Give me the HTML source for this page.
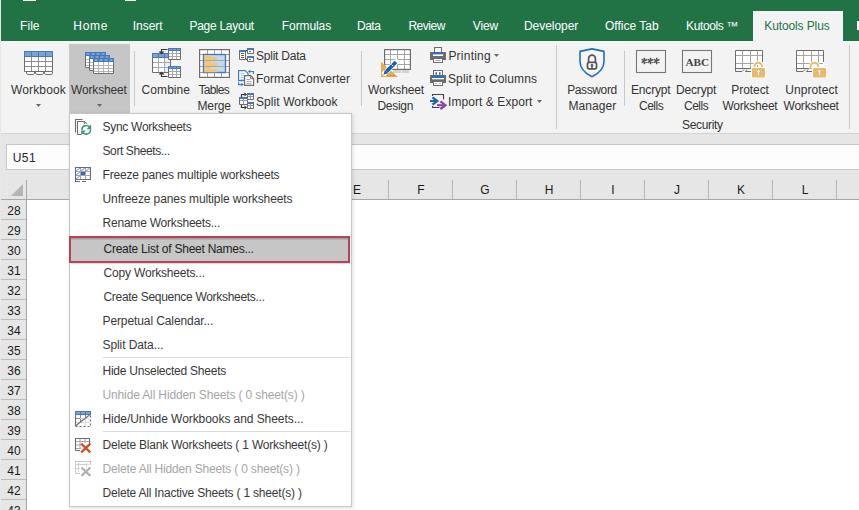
<!DOCTYPE html>
<html><head><meta charset="utf-8">
<style>
*{margin:0;padding:0;box-sizing:border-box}
html,body{width:859px;height:510px;overflow:hidden;background:#fff}
body{position:relative;font-family:"Liberation Sans",sans-serif;font-size:12px;color:#262626}
.a{position:absolute}
.t{position:absolute;white-space:nowrap;line-height:16px;font-size:12px;z-index:10}
svg{position:absolute;overflow:visible;z-index:12}
#menu{position:absolute;left:69px;top:113px;width:283px;height:394px;background:#fff;border:1px solid #c6c6c6;box-shadow:1px 1px 4px rgba(0,0,0,.13);z-index:8}
</style></head><body>
<!-- tab bar -->
<div class="a" style="left:0;top:0;width:859px;height:41px;background:#217346"></div>
<div class="a" style="left:23px;top:0;width:13px;height:1px;background:#fff"></div>
<div class="a" style="left:125px;top:0;width:11px;height:1px;background:#fff"></div>
<div class="a" style="left:753px;top:11px;width:90px;height:30px;background:#f3f3f3"></div>
<div class="a" style="left:857px;top:21px;width:2px;height:9px;background:#fff"></div>
<!-- ribbon -->
<div class="a" style="left:0;top:41px;width:859px;height:92px;background:#f3f3f3"></div>
<div class="a" style="left:0;top:133px;width:859px;height:1px;background:#d4d4d4"></div>
<div class="a" style="left:69px;top:44px;width:61px;height:70px;background:#c6c6c6"></div>
<div class="a" style="left:134px;top:51px;width:1px;height:55px;background:#c8c8c8"></div>
<div class="a" style="left:361px;top:51px;width:1px;height:55px;background:#c8c8c8"></div>
<div class="a" style="left:556px;top:45px;width:1px;height:84px;background:#c8c8c8"></div>
<div class="a" style="left:624px;top:51px;width:1px;height:55px;background:#c8c8c8"></div>
<div class="a" style="left:849px;top:45px;width:1px;height:84px;background:#c8c8c8"></div>
<svg style="left:24px;top:51px;z-index:12" width="30" height="25" viewBox="0 0 30 25"><rect x="0" y="5" width="29" height="16" fill="#fff"/><rect x="0" y="0" width="29" height="6" fill="#447abd"/><rect x="1" y="1" width="6" height="4" fill="#7da2d0"/><rect x="8" y="1" width="6" height="4" fill="#7da2d0"/><rect x="15" y="1" width="6" height="4" fill="#7da2d0"/><rect x="22" y="1" width="6" height="4" fill="#7da2d0"/><path d="M7.5 6V21 M14.5 6V21 M21.5 6V21 M1 10.5H28 M1 15.5H28" stroke="#8c8c8c" stroke-width="1" fill="none"/><path d="M.5 6V20.5H28.5V6" stroke="#6d6d6d" stroke-width="1" fill="none"/><path d="M2.5 21V22.5L4 23.5H9L10.5 22.5V21 M11.5 21V22.5L13 23.5H18L19.5 22.5V21 M20.5 21V22.5L22 23.5H27L28.5 22.5V21" stroke="#6d6d6d" stroke-width="1" fill="#fff"/></svg>
<svg style="left:85px;top:52px;z-index:12" width="30" height="23" viewBox="0 0 30 23"><rect x="0" y="0" width="21" height="16" fill="#fff"/><rect x="0" y="0" width="21" height="4" fill="#447abd"/><rect x="1.5" y="1" width="3.0" height="2" fill="#7da2d0"/><rect x="6.5" y="1" width="3.0" height="2" fill="#7da2d0"/><rect x="11.5" y="1" width="3.0" height="2" fill="#7da2d0"/><rect x="16.5" y="1" width="3.0" height="2" fill="#7da2d0"/><path d="M5.5 4V15 M10.5 4V15 M15.5 4V15 M1 7.5H20 M1 10.5H20 M1 13.5H20" stroke="#b4b4b4" stroke-width="1" fill="none"/><path d="M0.5 4V15.5H20.5V4" stroke="#6d6d6d" stroke-width="1" fill="none"/><rect x="4" y="3" width="21" height="16" fill="#fff"/><rect x="4" y="3" width="21" height="4" fill="#447abd"/><rect x="5.5" y="4" width="3.0" height="2" fill="#7da2d0"/><rect x="10.5" y="4" width="3.0" height="2" fill="#7da2d0"/><rect x="15.5" y="4" width="3.0" height="2" fill="#7da2d0"/><rect x="20.5" y="4" width="3.0" height="2" fill="#7da2d0"/><path d="M9.5 7V18 M14.5 7V18 M19.5 7V18 M5 10.5H24 M5 13.5H24 M5 16.5H24" stroke="#b4b4b4" stroke-width="1" fill="none"/><path d="M4.5 7V18.5H24.5V7" stroke="#6d6d6d" stroke-width="1" fill="none"/><rect x="8" y="6" width="21" height="16" fill="#fff"/><rect x="8" y="6" width="21" height="4" fill="#447abd"/><rect x="9.5" y="7" width="3.0" height="2" fill="#7da2d0"/><rect x="14.5" y="7" width="3.0" height="2" fill="#7da2d0"/><rect x="19.5" y="7" width="3.0" height="2" fill="#7da2d0"/><rect x="24.5" y="7" width="3.0" height="2" fill="#7da2d0"/><path d="M13.5 10V21 M18.5 10V21 M23.5 10V21 M9 13.5H28 M9 16.5H28 M9 19.5H28" stroke="#b4b4b4" stroke-width="1" fill="none"/><path d="M8.5 10V21.5H28.5V10" stroke="#6d6d6d" stroke-width="1" fill="none"/></svg>
<svg style="left:152px;top:48px;z-index:12" width="30" height="30" viewBox="0 0 30 30"><rect x="0" y="5" width="19" height="20" fill="#fff"/><rect x="13" y="10" width="6" height="15" fill="#eaf0f8"/><rect x="0" y="5" width="19" height="5" fill="#447abd"/><rect x="1" y="6" width="5" height="3" fill="#7da2d0"/><rect x="7" y="6" width="5" height="3" fill="#7da2d0"/><rect x="13" y="6" width="5" height="3" fill="#7da2d0"/><path d="M6.5 10V24M12.5 10V24M1 14.5H18M1 19.5H18" stroke="#a8a8a8" fill="none"/><path d="M.5 10V24.5H18.5V10" stroke="#6d6d6d" fill="none"/><rect x="16" y="0" width="13" height="12" fill="#fff"/><rect x="16" y="0" width="13" height="3" fill="#447abd"/><rect x="17" y="1" width="3" height="1" fill="#7da2d0"/><rect x="21" y="1" width="3" height="1" fill="#7da2d0"/><rect x="25" y="1" width="3" height="1" fill="#7da2d0"/><path d="M20.5 3V11M24.5 3V11M17 5.5H28M17 8.5H28" stroke="#a8a8a8" fill="none"/><path d="M16.5 3V11.5H28.5V3" stroke="#6d6d6d" fill="none"/><rect x="16" y="18" width="13" height="12" fill="#fff"/><rect x="16" y="18" width="13" height="3" fill="#447abd"/><rect x="17" y="19" width="3" height="1" fill="#7da2d0"/><rect x="21" y="19" width="3" height="1" fill="#7da2d0"/><rect x="25" y="19" width="3" height="1" fill="#7da2d0"/><path d="M20.5 21V29M24.5 21V29M17 23.5H28M17 26.5H28" stroke="#a8a8a8" fill="none"/><path d="M16.5 21V29.5H28.5V21" stroke="#6d6d6d" fill="none"/><path d="M15.5 1.5H9.5V4.5M15.5 28.5H9.5V25.5" stroke="#3a3a3a" stroke-width="1.2" fill="none"/><path d="M6.5 3.5L9.5 6.5L12.5 3.5Z M6.5 26.5L9.5 23.5L12.5 26.5Z" fill="#3a3a3a"/></svg>
<svg style="left:199px;top:49px;z-index:12" width="31" height="29" viewBox="0 0 31 29"><rect x="0" y="0" width="31" height="29" fill="#fff"/><path d="M8.5 0V29M15.5 0V29M22.5 0V29M0 5.5H31M0 11.5H31M0 17.5H31M0 23.5H31" stroke="#a0a0a0" fill="none"/><rect x="4.5" y="5.5" width="22" height="18" fill="#c6d8ee" stroke="#447abd" stroke-width="1.4"/><path d="M5.2 6.2H12V8.5H14V7.7H16V8.5H18.3V11.5H5.2Z" fill="#f2c679"/><path d="M5.2 12H12V14.3H14V13.5H16V14.3H18.3V17.3H5.2Z" fill="#f2c679"/><path d="M5.2 18H12V20.3H14V19.5H16V20.3H18.3V23.3H5.2Z" fill="#f2c679"/><path d="M5 11.5H26M5 17.5H26" stroke="#a8a8a8" fill="none"/><rect x=".6" y=".6" width="29.8" height="27.8" fill="none" stroke="#6d6d6d" stroke-width="1.2"/></svg>
<svg style="left:239px;top:48px;z-index:12" width="16" height="15" viewBox="0 0 16 15"><rect x="0" y="2" width="7" height="10" fill="#fff"/><rect x="0" y="2" width="7" height="2" fill="#447abd"/><path d="" stroke="#9a9a9a" stroke-width="1" fill="none"/><path d="M0.5 4V11.5H6.5V4" stroke="#6d6d6d" stroke-width="1" fill="none"/><path d="M2.5 5.5H4.5M2.5 7.5H4.5M2.5 9.5H4.5" stroke="#555" stroke-width="1" stroke-linecap="round"/><rect x="8" y="0" width="7" height="6" fill="#fff"/><rect x="8" y="0" width="7" height="2" fill="#447abd"/><path d="" stroke="#9a9a9a" stroke-width="1" fill="none"/><path d="M8.5 2V5.5H14.5V2" stroke="#6d6d6d" stroke-width="1" fill="none"/><rect x="8" y="8" width="7" height="6" fill="#fff"/><rect x="8" y="8" width="7" height="2" fill="#447abd"/><path d="" stroke="#9a9a9a" stroke-width="1" fill="none"/><path d="M8.5 10V13.5H14.5V10" stroke="#6d6d6d" stroke-width="1" fill="none"/><path d="M10.5 3.5H11.5M10.5 11.5H11.5" stroke="#555" stroke-width="1" stroke-linecap="round"/><path d="M6.5 3.5L8.2 2M6.5 10.5L8.2 12" stroke="#333" fill="none"/></svg>
<svg style="left:238px;top:70px;z-index:12" width="16" height="16" viewBox="0 0 16 16"><path d="M.6 .6H7.2L10 3.4V10.6H.6Z" fill="#fff" stroke="#3f7bc4" stroke-width="1.2"/><path d="M2.5 3.5H6.5M2.5 5.5H8M2.5 7.5H8M2.5 9.5H6" stroke="#a8c4e8"/><path d="M6.6 5.6H12.6L15.6 8.6V15.4H6.6Z" fill="#fff" stroke="#6d6d6d" stroke-width="1.2"/><path d="M12.5 5.6V8.7H15.6" stroke="#6d6d6d" fill="none" stroke-width=".9"/><path d="M8.5 9.5H12M8.5 11.5H13.8M8.5 13.5H13.8" stroke="#a8a8a8"/><path d="M15.4 4V1.5H11.5" stroke="#3f7bc4" stroke-width="1.2" fill="none"/><path d="M12.3 -.4L10 1.5L12.3 3.4Z" fill="#3f7bc4"/><path d="M.6 12.3V14.6H4" stroke="#3f7bc4" stroke-width="1.2" fill="none"/><path d="M3.5 12.7L5.8 14.6L3.5 16.5Z" fill="#3f7bc4"/></svg>
<svg style="left:238px;top:93px;z-index:12" width="17" height="16" viewBox="0 0 17 16"><rect x="1" y="4" width="9" height="8" fill="#fff"/><rect x="1" y="4" width="9" height="2" fill="#447abd"/><path d="M5.5 6V11 M2 7.5H9" stroke="#9a9a9a" stroke-width="1" fill="none"/><path d="M1.5 6V11.5H9.5V6" stroke="#6d6d6d" stroke-width="1" fill="none"/><rect x="9" y="0" width="7" height="7" fill="#fff"/><rect x="9" y="0" width="7" height="2" fill="#447abd"/><path d="M12.5 2V6 M10 3.5H15" stroke="#9a9a9a" stroke-width="1" fill="none"/><path d="M9.5 2V6.5H15.5V2" stroke="#6d6d6d" stroke-width="1" fill="none"/><rect x="9" y="9" width="7" height="7" fill="#fff"/><rect x="9" y="9" width="7" height="2" fill="#447abd"/><path d="M12.5 11V15 M10 12.5H15" stroke="#9a9a9a" stroke-width="1" fill="none"/><path d="M9.5 11V15.5H15.5V11" stroke="#6d6d6d" stroke-width="1" fill="none"/><path d="M3.5 4V1.5H7M3.5 12V14.5H7" stroke="#333" stroke-width="1.2" fill="none"/><path d="M6.5 -.5L9 1.5L6.5 3.5ZM6.5 12.5L9 14.5L6.5 16.5Z" fill="#333"/></svg>
<svg style="left:381px;top:49px;z-index:12" width="32" height="29" viewBox="0 0 32 29"><rect x="12" y="21" width="16" height="3" fill="#d4d4d4"/><path d="M20.5 21V24" stroke="#eee"/><rect x="3" y="0" width="27" height="21" fill="#fff"/><path d="M9.5 1V20M16.5 1V20M23.5 1V20M4 5.5H29M4 10.5H29M4 15.5H29" stroke="#a6a6a6" fill="none"/><rect x="3.6" y=".6" width="25.8" height="19.8" fill="none" stroke="#6d6d6d" stroke-width="1.2"/><path d="M0 12.7V28H17Z" fill="#e8ab4f"/><path d="M3.8 24.2L15.2 12.8" stroke="#fff" stroke-width="5.4" stroke-linecap="round"/><path d="M5.6 22.4L15 13" stroke="#1f5fad" stroke-width="3.8"/><path d="M2.4 25.8L3.9 20.8L7.4 24.3Z" fill="#1f5fad"/><path d="M12.2 17.2L10.4 15.4" stroke="#fff" stroke-width=".9"/><path d="M6 26.5H7M9 26.5H10M12 26.5H13" stroke="#8a6a30" stroke-width=".8"/></svg>
<svg style="left:430px;top:46px;z-index:12" width="17" height="17" viewBox="0 0 17 17"><rect x="4.5" y="1.5" width="7" height="6" fill="#fff" stroke="#6d6d6d"/><path d="M0 6H3V10H13V6H16V14H0Z" fill="#6d6d6d"/><rect x="3" y="6" width="10" height="2.6" fill="#2f6ebd"/><rect x="3" y="8.6" width="10" height="1.4" fill="#fff"/><rect x="3.5" y="12.5" width="9" height="4" fill="#fff" stroke="#6d6d6d"/><path d="M5.5 14.5H10.5" stroke="#8fb0d8"/></svg>
<svg style="left:430px;top:69px;z-index:12" width="17" height="17" viewBox="0 0 17 17"><rect x="3.5" y="1.5" width="9" height="6" fill="#fff" stroke="#6d6d6d"/><path d="M6.2 3.3V5.7M9.8 3.3V5.7" stroke="#2f6ebd" stroke-width="1.6"/><path d="M0 6H16V14H0Z" fill="#6d6d6d"/><rect x="2" y="6.5" width="12" height="2.5" fill="#2f6ebd"/><rect x="2" y="9" width="12" height="1.3" fill="#fff"/><rect x="3.5" y="12.5" width="9" height="4" fill="#fff" stroke="#6d6d6d"/><path d="M5 14.5H7M9 14.5H11" stroke="#8fb0d8"/></svg>
<svg style="left:430px;top:91px;z-index:12" width="18" height="19" viewBox="0 0 18 19"><path d="M2.5 5V3.5H13.5V8.5M2.5 15V16.5H9.5" stroke="#444" stroke-width="1.1" fill="none"/><path d="M0 10H6" stroke="#1f63b4" stroke-width="2"/><path d="M2.5 6.3L7.3 10L2.5 13.7" stroke="#1f63b4" stroke-width="2.3" fill="none"/><path d="M7 14.2H13" stroke="#8540ae" stroke-width="2"/><path d="M10.4 10.4L15.4 14.2L10.4 18" stroke="#8540ae" stroke-width="2.3" fill="none"/></svg>
<svg style="left:579px;top:48px;z-index:12" width="26" height="30" viewBox="0 0 26 30"><path d="M13 .9L25 3.4V13.5C25 20.5 19.5 25.5 13 28.8C6.5 25.5 1 20.5 1 13.5V3.4Z" fill="#f6f6f6" stroke="#1f6fc0" stroke-width="1.6" stroke-linejoin="round"/><path d="M9.6 14V10.6A3.4 3.4 0 0 1 16.4 10.6V14" fill="none" stroke="#555" stroke-width="1.7"/><rect x="8.5" y="14.3" width="9" height="6.6" rx="1.8" fill="#fff" stroke="#555" stroke-width="1.7"/><path d="M13 17.2V20.5" stroke="#555" stroke-width="1.5"/><circle cx="13" cy="17.4" r="1.3" fill="#555"/></svg>
<svg style="left:636px;top:50px;z-index:12" width="30" height="23" viewBox="0 0 30 23"><rect x=".5" y=".5" width="29" height="22" fill="#f3f3f3" stroke="#777" stroke-width="1.1"/><path d="M8.4 7.8V14.2M5.6 9.4L11.2 12.6M5.6 12.6L11.2 9.4M14.5 7.8V14.2M11.7 9.4L17.3 12.6M11.7 12.6L17.3 9.4M20.7 7.8V14.2M17.9 9.4L23.5 12.6M17.9 12.6L23.5 9.4" stroke="#555" stroke-width="1.5"/></svg>
<svg style="left:682px;top:50px;z-index:12" width="30" height="23" viewBox="0 0 30 23"><rect x=".5" y=".5" width="29" height="22" fill="#f3f3f3" stroke="#777" stroke-width="1.1"/><text x="15.3" y="16" text-anchor="middle" font-family="Liberation Serif" font-weight="bold" font-size="11.2" fill="#444">ABC</text></svg>
<svg style="left:735px;top:50px;z-index:12" width="32" height="28" viewBox="0 0 32 28"><rect x="0" y="0" width="28" height="18" fill="#fff"/><path d="M7.5 1V18 M15.5 1V18 M22.5 1V18 M1 5.5H27 M1 13.5H27" stroke="#a6a6a6" fill="none"/><path d="M.5 18V.5H27.5V12" stroke="#6d6d6d" fill="none"/><path d="M.5 18V21.5H7L9 19.5M12 19.5L10.5 21.5H16M1 18.5H17" stroke="#6d6d6d" fill="none"/><path d="M19.4 18.5V16.6A3.85 3.85 0 0 1 27.1 16.6V18.5" fill="none" stroke="#fff" stroke-width="3.6"/><path d="M19.4 18.5V16.6A3.85 3.85 0 0 1 27.1 16.6V18.5" fill="none" stroke="#e9b96c" stroke-width="1.8"/><rect x="16" y="17" width="15" height="11" fill="#fff"/><rect x="17" y="18" width="13" height="9.5" rx=".8" fill="#e9b96c"/><circle cx="23.5" cy="21.3" r="1.2" fill="#fff"/><path d="M23.5 21.5V25" stroke="#fff" stroke-width="1"/></svg>
<svg style="left:796px;top:50px;z-index:12" width="32" height="28" viewBox="0 0 32 28"><rect x="0" y="0" width="28" height="18" fill="#fff"/><path d="M7.5 1V18 M15.5 1V18 M22.5 1V18 M1 5.5H27 M1 13.5H27" stroke="#a6a6a6" fill="none"/><path d="M.5 18V.5H27.5V12" stroke="#6d6d6d" fill="none"/><path d="M.5 18V21.5H7L9 19.5M12 19.5L10.5 21.5H16M1 18.5H17" stroke="#6d6d6d" fill="none"/><path d="M14.6 18.5V16.6A3.85 3.85 0 0 1 22.3 16.6V17.5" fill="none" stroke="#fff" stroke-width="3.6"/><path d="M14.6 18.5V16.6A3.85 3.85 0 0 1 22.3 16.6V17.5" fill="none" stroke="#e9b96c" stroke-width="1.8"/><rect x="16" y="17" width="15" height="11" fill="#fff"/><rect x="17" y="18" width="13" height="9.5" rx=".8" fill="#e9b96c"/><circle cx="23.5" cy="21.3" r="1.2" fill="#fff"/><path d="M23.5 21.5V25" stroke="#fff" stroke-width="1"/></svg>
<svg style="left:36px;top:104px;z-index:12" width="6" height="4" viewBox="0 0 6 4"><path d="M0 0H5L2.5 3Z" fill="#666"/></svg>
<svg style="left:97px;top:104px;z-index:12" width="6" height="4" viewBox="0 0 6 4"><path d="M0 0H5L2.5 3Z" fill="#666"/></svg>
<svg style="left:494px;top:54px;z-index:12" width="6" height="4" viewBox="0 0 6 4"><path d="M0 0H5L2.5 3Z" fill="#666"/></svg>
<svg style="left:537px;top:100px;z-index:12" width="6" height="4" viewBox="0 0 6 4"><path d="M0 0H5L2.5 3Z" fill="#666"/></svg>
<!-- formula bar -->
<div class="a" style="left:0;top:134px;width:859px;height:66px;background:#e6e6e6"></div>
<div class="a" style="left:6px;top:144px;width:860px;height:26px;background:#fdfdfd;border:1px solid #c6c6c6"></div>
<!-- headers -->
<div class="a" style="left:0;top:199px;width:859px;height:1px;background:#a6a6a6"></div>
<div class="a" style="left:26px;top:180px;width:1px;height:330px;background:#a6a6a6"></div>
<div class="a" style="left:0;top:200px;width:26px;height:310px;background:#e6e6e6"></div>
<div class="a" style="left:27px;top:200px;width:832px;height:310px;background:#fff"></div>
<div class="a" style="left:388px;top:180px;width:1px;height:19px;background:#b4b4b4"></div>
<div class="a" style="left:452px;top:180px;width:1px;height:19px;background:#b4b4b4"></div>
<div class="a" style="left:516px;top:180px;width:1px;height:19px;background:#b4b4b4"></div>
<div class="a" style="left:580px;top:180px;width:1px;height:19px;background:#b4b4b4"></div>
<div class="a" style="left:644px;top:180px;width:1px;height:19px;background:#b4b4b4"></div>
<div class="a" style="left:708px;top:180px;width:1px;height:19px;background:#b4b4b4"></div>
<div class="a" style="left:772px;top:180px;width:1px;height:19px;background:#b4b4b4"></div>
<div class="a" style="left:836px;top:180px;width:1px;height:19px;background:#b4b4b4"></div>
<div class="a" style="left:900px;top:180px;width:1px;height:19px;background:#b4b4b4"></div>
<div class="a" style="left:0;top:219px;width:26px;height:1px;background:#bcbcbc"></div>
<div class="a" style="left:0;top:239px;width:26px;height:1px;background:#bcbcbc"></div>
<div class="a" style="left:0;top:259px;width:26px;height:1px;background:#bcbcbc"></div>
<div class="a" style="left:0;top:279px;width:26px;height:1px;background:#bcbcbc"></div>
<div class="a" style="left:0;top:299px;width:26px;height:1px;background:#bcbcbc"></div>
<div class="a" style="left:0;top:319px;width:26px;height:1px;background:#bcbcbc"></div>
<div class="a" style="left:0;top:339px;width:26px;height:1px;background:#bcbcbc"></div>
<div class="a" style="left:0;top:359px;width:26px;height:1px;background:#bcbcbc"></div>
<div class="a" style="left:0;top:379px;width:26px;height:1px;background:#bcbcbc"></div>
<div class="a" style="left:0;top:399px;width:26px;height:1px;background:#bcbcbc"></div>
<div class="a" style="left:0;top:419px;width:26px;height:1px;background:#bcbcbc"></div>
<div class="a" style="left:0;top:439px;width:26px;height:1px;background:#bcbcbc"></div>
<div class="a" style="left:0;top:459px;width:26px;height:1px;background:#bcbcbc"></div>
<div class="a" style="left:0;top:479px;width:26px;height:1px;background:#bcbcbc"></div>
<div class="a" style="left:0;top:499px;width:26px;height:1px;background:#bcbcbc"></div>
<div class="a" style="left:0;top:519px;width:26px;height:1px;background:#bcbcbc"></div>
<svg style="left:0;top:0" width="30" height="200"><path d="M23 184 L23 196 L11 196 Z" fill="#b4b4b4"/></svg>
<div class="a" style="left:0;top:0;width:1px;height:510px;background:#e8e8e8;z-index:20"></div>
<!-- menu -->
<div id="menu"></div>
<div class="a" style="left:69px;top:236px;width:281px;height:27px;background:#c6c6c6;border:2px solid #bc3f5a;z-index:9"></div>
<div class="a" style="left:71px;top:238px;width:277px;height:2px;background:linear-gradient(#9a9a9a,#b8b8b8);z-index:9"></div>
<div class="a" style="left:71px;top:263px;width:279px;height:1px;background:#dcdcdc;z-index:9"></div>
<div class="a" style="left:103px;top:357px;width:247px;height:1px;background:#d9dde1;z-index:9"></div>
<div class="a" style="left:103px;top:431px;width:247px;height:1px;background:#d9dde1;z-index:9"></div>
<svg style="left:72px;top:116px;z-index:12" width="22" height="22" viewBox="0 0 22 22"><path d="M3.5 16.5V3.5H10.5" stroke="#6d6d6d" stroke-width="1.1" fill="none"/><path d="M5.5 18.5V5.5H12.3L15.8 9V9.5M5.5 18.5H9" stroke="#6d6d6d" stroke-width="1.1" fill="none"/><path d="M12.3 5.5V9H15.8Z" fill="#fff" stroke="#6d6d6d" stroke-width="1"/><path d="M9.92 14.17A4.3 4.3 0 0 1 18.10 11.98M18.48 13.43A4.3 4.3 0 0 1 10.30 15.62" stroke="#fff" stroke-width="3.2" fill="none"/><path d="M9.92 14.17A4.3 4.3 0 0 1 18.10 11.98M18.48 13.43A4.3 4.3 0 0 1 10.30 15.62" stroke="#3f9a74" stroke-width="1.6" fill="none"/><path d="M19.2 8.3V13.2H14.6Z M9.2 19.3V14.4H13.8Z" fill="#3f9a74"/></svg>
<svg style="left:72px;top:164px;z-index:12" width="22" height="22" viewBox="0 0 22 22"><rect x="3" y="3" width="16" height="13" fill="#fff"/><path d="M4 7L8 4M9 7L13 4M14 7L18 4M4 11L8 8M4 15L8 12" stroke="#8fb3e0" stroke-width="1.2"/><rect x="9" y="8" width="4" height="3" fill="#2f6ebd"/><path d="M8.5 3V16M13.5 3V16M3 7.5H19M3 11.5H19" stroke="#a6a6a6" fill="none"/><path d="M3.5 18V3.5H18.5V15.5H3.5" stroke="#6d6d6d" stroke-width="1.1" fill="none"/><path d="M4 17.5H8M10 17.5H14" stroke="#6d6d6d" fill="none"/></svg>
<svg style="left:72px;top:408px;z-index:12" width="22" height="22" viewBox="0 0 22 22"><rect x="3" y="3" width="16" height="4" fill="#447abd"/><rect x="4" y="4" width="4" height="2" fill="#7da2d0"/><rect x="9" y="4" width="4" height="2" fill="#7da2d0"/><rect x="14" y="4" width="4" height="2" fill="#7da2d0"/><path d="M8.5 7V14M13.5 7V10M4 10.5H12M4 14.5H8" stroke="#8a8a8a" fill="none"/><path d="M13.5 11V18M4 14.5H18M8 10.5H18" stroke="#e0e0e0" fill="none"/><path d="M3.5 7V18" stroke="#6d6d6d" stroke-width="1.1"/><path d="M3.5 18.5H18.5V7.5" stroke="#6d6d6d" stroke-width="1.2" stroke-dasharray="2 2" fill="none"/><path d="M4 17.5L17.5 7" stroke="#6d6d6d" stroke-width="1.1"/></svg>
<svg style="left:72px;top:434px;z-index:12" width="22" height="22" viewBox="0 0 22 22"><path d="M8 4.5V15M4 7.5H18M4 11H9M13 4.5V9M4 14.5H9" stroke="#a6a6a6" fill="none"/><path d="M3.5 16.5V4.5H17.5V9M3.5 16.5H8" stroke="#6d6d6d" stroke-width="1.1" fill="none"/><path d="M9.2 9.6L18.3 18.3M18.3 9.6L9.2 18.3" stroke="#d34a24" stroke-width="2.3"/></svg>
<svg style="left:72px;top:458px;z-index:12" width="22" height="22" viewBox="0 0 22 22"><path d="M3.5 3.5H18.5M3.5 3.5V15.5M18.5 3.5V7.5M3.5 15.5H8" stroke="#9a9a9a" stroke-width="1" stroke-dasharray="1 1" fill="none"/><path d="M6.5 5V14M4 6.5H17M4 10.5H8M14.5 5V9" stroke="#cfcfcf" fill="none"/><path d="M9.5 9.5L18.3 17.8M18.3 9.5L9.5 17.8" stroke="#b0b0b0" stroke-width="2.3"/></svg>
<div class="t" style="left:20.00px;top:18px;letter-spacing:0.067px;color:#ffffff">File</div>
<div class="t" style="left:73.30px;top:18px;letter-spacing:0.667px;color:#ffffff">Home</div>
<div class="t" style="left:132.70px;top:18px;color:#ffffff">Insert</div>
<div class="t" style="left:189.40px;top:18px;letter-spacing:-0.260px;color:#ffffff">Page Layout</div>
<div class="t" style="left:281.80px;top:18px;letter-spacing:-0.086px;color:#ffffff">Formulas</div>
<div class="t" style="left:357.00px;top:18px;letter-spacing:-0.500px;color:#ffffff">Data</div>
<div class="t" style="left:408.40px;top:18px;letter-spacing:-0.480px;color:#ffffff">Review</div>
<div class="t" style="left:472.80px;top:18px;letter-spacing:-0.100px;color:#ffffff">View</div>
<div class="t" style="left:524.00px;top:18px;letter-spacing:-0.050px;color:#ffffff">Developer</div>
<div class="t" style="left:605.00px;top:18px;color:#ffffff">Office Tab</div>
<div class="t" style="left:686.00px;top:18px;letter-spacing:-0.375px;color:#ffffff">Kutools ™</div>
<div class="t" style="left:764.30px;top:18px;letter-spacing:-0.118px;color:#217346">Kutools Plus</div>
<div class="t" style="left:11.00px;top:82px;letter-spacing:0.143px;color:#333333">Workbook</div>
<div class="t" style="left:71.00px;top:82px;letter-spacing:-0.162px;color:#333333">Worksheet</div>
<div class="t" style="left:141.60px;top:82px;letter-spacing:0.067px;color:#333333">Combine</div>
<div class="t" style="left:198.50px;top:82px;letter-spacing:-0.700px;color:#333333">Tables</div>
<div class="t" style="left:197.50px;top:98px;letter-spacing:-0.125px;color:#333333">Merge</div>
<div class="t" style="left:256.00px;top:48px;letter-spacing:-0.222px;color:#333333">Split Data</div>
<div class="t" style="left:256.00px;top:71px;color:#333333">Format Converter</div>
<div class="t" style="left:256.00px;top:94px;letter-spacing:0.077px;color:#333333">Split Workbook</div>
<div class="t" style="left:368.00px;top:82px;letter-spacing:-0.125px;color:#333333">Worksheet</div>
<div class="t" style="left:377.50px;top:98px;letter-spacing:-0.300px;color:#333333">Design</div>
<div class="t" style="left:448.40px;top:48px;letter-spacing:0.229px;color:#333333">Printing</div>
<div class="t" style="left:448.00px;top:71px;letter-spacing:0.107px;color:#333333">Split to Columns</div>
<div class="t" style="left:448.00px;top:94px;letter-spacing:0.071px;color:#333333">Import &amp; Export</div>
<div class="t" style="left:567.20px;top:82px;letter-spacing:-0.386px;color:#333333">Password</div>
<div class="t" style="left:568.50px;top:98px;letter-spacing:0.083px;color:#333333">Manager</div>
<div class="t" style="left:631.00px;top:82px;letter-spacing:-0.167px;color:#333333">Encrypt</div>
<div class="t" style="left:639.00px;top:98px;letter-spacing:-0.500px;color:#333333">Cells</div>
<div class="t" style="left:676.00px;top:82px;letter-spacing:-0.167px;color:#333333">Decrypt</div>
<div class="t" style="left:684.00px;top:98px;letter-spacing:-0.500px;color:#333333">Cells</div>
<div class="t" style="left:731.30px;top:82px;letter-spacing:-0.067px;color:#333333">Protect</div>
<div class="t" style="left:722.50px;top:98px;letter-spacing:-0.250px;color:#333333">Worksheet</div>
<div class="t" style="left:785.30px;top:82px;letter-spacing:0.062px;color:#333333">Unprotect</div>
<div class="t" style="left:783.50px;top:98px;letter-spacing:-0.213px;color:#333333">Worksheet</div>
<div class="t" style="left:682.00px;top:117px;letter-spacing:-0.343px;color:#333333">Security</div>
<div class="t" style="left:12.70px;top:150px;letter-spacing:0.500px;color:#262626">U51</div>
<div class="t" style="left:325.00px;width:64px;text-align:center;top:182px;color:#1a1a1a">E</div>
<div class="t" style="left:389.00px;width:64px;text-align:center;top:182px;color:#1a1a1a">F</div>
<div class="t" style="left:453.00px;width:64px;text-align:center;top:182px;color:#1a1a1a">G</div>
<div class="t" style="left:517.00px;width:64px;text-align:center;top:182px;color:#1a1a1a">H</div>
<div class="t" style="left:581.00px;width:64px;text-align:center;top:182px;color:#1a1a1a">I</div>
<div class="t" style="left:645.00px;width:64px;text-align:center;top:182px;color:#1a1a1a">J</div>
<div class="t" style="left:709.00px;width:64px;text-align:center;top:182px;color:#1a1a1a">K</div>
<div class="t" style="left:773.00px;width:64px;text-align:center;top:182px;color:#1a1a1a">L</div>
<div class="t" style="left:1.00px;width:26px;text-align:center;top:203px;color:#1a1a1a">28</div>
<div class="t" style="left:1.00px;width:26px;text-align:center;top:223px;color:#1a1a1a">29</div>
<div class="t" style="left:1.00px;width:26px;text-align:center;top:243px;color:#1a1a1a">30</div>
<div class="t" style="left:1.00px;width:26px;text-align:center;top:263px;color:#1a1a1a">31</div>
<div class="t" style="left:1.00px;width:26px;text-align:center;top:283px;color:#1a1a1a">32</div>
<div class="t" style="left:1.00px;width:26px;text-align:center;top:303px;color:#1a1a1a">33</div>
<div class="t" style="left:1.00px;width:26px;text-align:center;top:323px;color:#1a1a1a">34</div>
<div class="t" style="left:1.00px;width:26px;text-align:center;top:343px;color:#1a1a1a">35</div>
<div class="t" style="left:1.00px;width:26px;text-align:center;top:363px;color:#1a1a1a">36</div>
<div class="t" style="left:1.00px;width:26px;text-align:center;top:383px;color:#1a1a1a">37</div>
<div class="t" style="left:1.00px;width:26px;text-align:center;top:403px;color:#1a1a1a">38</div>
<div class="t" style="left:1.00px;width:26px;text-align:center;top:423px;color:#1a1a1a">39</div>
<div class="t" style="left:1.00px;width:26px;text-align:center;top:443px;color:#1a1a1a">40</div>
<div class="t" style="left:1.00px;width:26px;text-align:center;top:463px;color:#1a1a1a">41</div>
<div class="t" style="left:1.00px;width:26px;text-align:center;top:483px;color:#1a1a1a">42</div>
<div class="t" style="left:1.00px;width:26px;text-align:center;top:503px;color:#1a1a1a">43</div>
<div class="t" style="left:102.50px;top:119px;letter-spacing:-0.286px;color:#383838">Sync Worksheets</div>
<div class="t" style="left:102.50px;top:143px;letter-spacing:-0.400px;color:#383838">Sort Sheets...</div>
<div class="t" style="left:102.50px;top:167px;letter-spacing:-0.161px;color:#383838">Freeze panes multiple worksheets</div>
<div class="t" style="left:102.50px;top:191px;letter-spacing:-0.103px;color:#383838">Unfreeze panes multiple worksheets</div>
<div class="t" style="left:102.50px;top:215px;letter-spacing:-0.211px;color:#383838">Rename Worksheets...</div>
<div class="t" style="left:103.50px;top:241px;letter-spacing:-0.250px;color:#222222">Create List of Sheet Names...</div>
<div class="t" style="left:103.50px;top:265px;letter-spacing:-0.176px;color:#383838">Copy Worksheets...</div>
<div class="t" style="left:103.50px;top:289px;letter-spacing:-0.300px;color:#383838">Create Sequence Worksheets...</div>
<div class="t" style="left:102.50px;top:313px;letter-spacing:-0.100px;color:#383838">Perpetual Calendar...</div>
<div class="t" style="left:102.50px;top:337px;letter-spacing:-0.083px;color:#383838">Split Data...</div>
<div class="t" style="left:102.50px;top:363px;letter-spacing:-0.238px;color:#383838">Hide Unselected Sheets</div>
<div class="t" style="left:102.50px;top:387px;letter-spacing:-0.137px;color:#a6a6a6">Unhide All Hidden Sheets ( 0 sheet(s) )</div>
<div class="t" style="left:102.50px;top:411px;letter-spacing:-0.065px;color:#383838">Hide/Unhide Workbooks and Sheets...</div>
<div class="t" style="left:102.50px;top:437px;letter-spacing:-0.207px;color:#383838">Delete Blank Worksheets ( 1 Worksheet(s) )</div>
<div class="t" style="left:102.50px;top:461px;letter-spacing:-0.176px;color:#a6a6a6">Delete All Hidden Sheets ( 0 sheet(s) )</div>
<div class="t" style="left:102.50px;top:485px;letter-spacing:-0.200px;color:#383838">Delete All Inactive Sheets ( 1 sheet(s) )</div>
</body></html>
